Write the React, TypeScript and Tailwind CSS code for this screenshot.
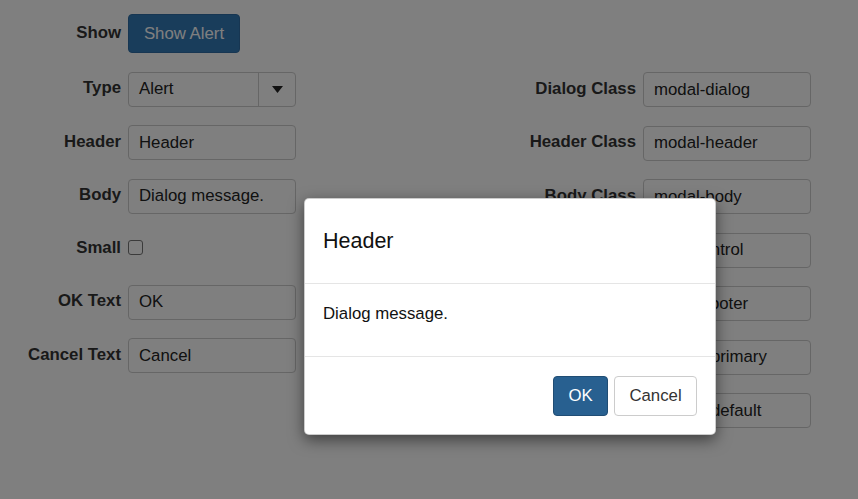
import React from 'react'

const leftRows = [
  { label: 'Header', value: 'Header' },
  { label: 'Body', value: 'Dialog message.' },
]

const rightRows = [
  { label: 'Dialog Class', value: 'modal-dialog' },
  { label: 'Header Class', value: 'modal-header' },
  { label: 'Body Class', value: 'modal-body' },
  { label: 'Input Class', value: 'form-control' },
  { label: 'Footer Class', value: 'modal-footer' },
  { label: 'OK Class', value: 'btn btn-primary' },
  { label: 'Cancel Class', value: 'btn btn-default' },
]

function Label({ children, width }: { children: React.ReactNode; width: string }) {
  return (
    <label className={`${width} shrink-0 pr-[7px] text-right font-bold whitespace-nowrap mb-[2px]`}>
      {children}
    </label>
  )
}

function TextBox({ value }: { value: string }) {
  return (
    <div className="flex h-[35px] w-[168px] items-center rounded-[4px] border border-[#ccc] bg-white px-[10px] text-[#222]">
      {value}
    </div>
  )
}

export default function App() {
  return (
    <div className="relative min-h-[499px] overflow-hidden bg-white font-['Liberation_Sans',Arial,sans-serif] text-[16.8px] text-[#333]">
      <div className="flex pt-[14px]">
        {/* left form */}
        <div className="flex w-[296px] flex-col gap-[18.5px]">
          <div className="flex h-[39px] items-center">
            <Label width="w-[128px]">Show</Label>
            <button className="h-[39px] w-[112px] rounded-[4px] border border-[#2e6da4] bg-[#337ab7] text-white">
              Show Alert
            </button>
          </div>
          <div className="flex h-[35px] items-center">
            <Label width="w-[128px]">Type</Label>
            <div className="flex h-[35px] w-[168px] items-center rounded-[4px] border border-[#ccc] bg-white text-[#222]">
              <span className="flex-1 px-[10px]">Alert</span>
              <div className="flex h-full w-[37px] items-center justify-center border-l border-[#ccc]">
                <svg width="11" height="7" viewBox="0 0 11 7">
                  <path d="M0 0h11L5.5 7z" fill="#222" />
                </svg>
              </div>
            </div>
          </div>
          {leftRows.map((r) => (
            <div key={r.label} className="flex h-[35px] items-center">
              <Label width="w-[128px]">{r.label}</Label>
              <TextBox value={r.value} />
            </div>
          ))}
          <div className="flex h-[34px] items-center">
            <Label width="w-[128px]">Small</Label>
            <div className="mt-[-4px] h-[15px] w-[15px] rounded-[3px] border border-[#767676] bg-white" />
          </div>
          <div className="flex h-[35px] items-center">
            <Label width="w-[128px]">OK Text</Label>
            <TextBox value="OK" />
          </div>
          <div className="flex h-[35px] items-center">
            <Label width="w-[128px]">Cancel Text</Label>
            <TextBox value="Cancel" />
          </div>
        </div>

        {/* right form */}
        <div className="ml-[204px] flex flex-col gap-[18.5px] pt-[58px]">
          {rightRows.map((r) => (
            <div key={r.label} className="flex h-[35px] items-center">
              <Label width="w-[143px]">{r.label}</Label>
              <TextBox value={r.value} />
            </div>
          ))}
        </div>
      </div>

      {/* backdrop */}
      <div className="absolute inset-0 bg-black/50" />

      {/* dialog */}
      <div className="absolute left-[304px] top-[198px] w-[412px] rounded-[5px] border border-black/20 bg-white shadow-[0_5px_15px_rgba(0,0,0,0.5)]">
        <div className="flex h-[85px] items-center border-b border-[#e5e5e5] px-[18px]">
          <h4 className="text-[21.5px] text-[#111]">Header</h4>
        </div>
        <div className="h-[73px] border-b border-[#e5e5e5] px-[18px] pt-[19px] leading-[22px] text-[#111]">
          Dialog message.
        </div>
        <div className="flex justify-end gap-[6px] pb-[18px] pl-[18px] pr-[18px] pt-[19px]">
          <button className="h-[40px] w-[55px] rounded-[4px] border border-[#204d74] bg-[#286090] text-white">
            OK
          </button>
          <button className="h-[40px] w-[83px] rounded-[4px] border border-[#ccc] bg-white text-[#333]">
            Cancel
          </button>
        </div>
      </div>
    </div>
  )
}
